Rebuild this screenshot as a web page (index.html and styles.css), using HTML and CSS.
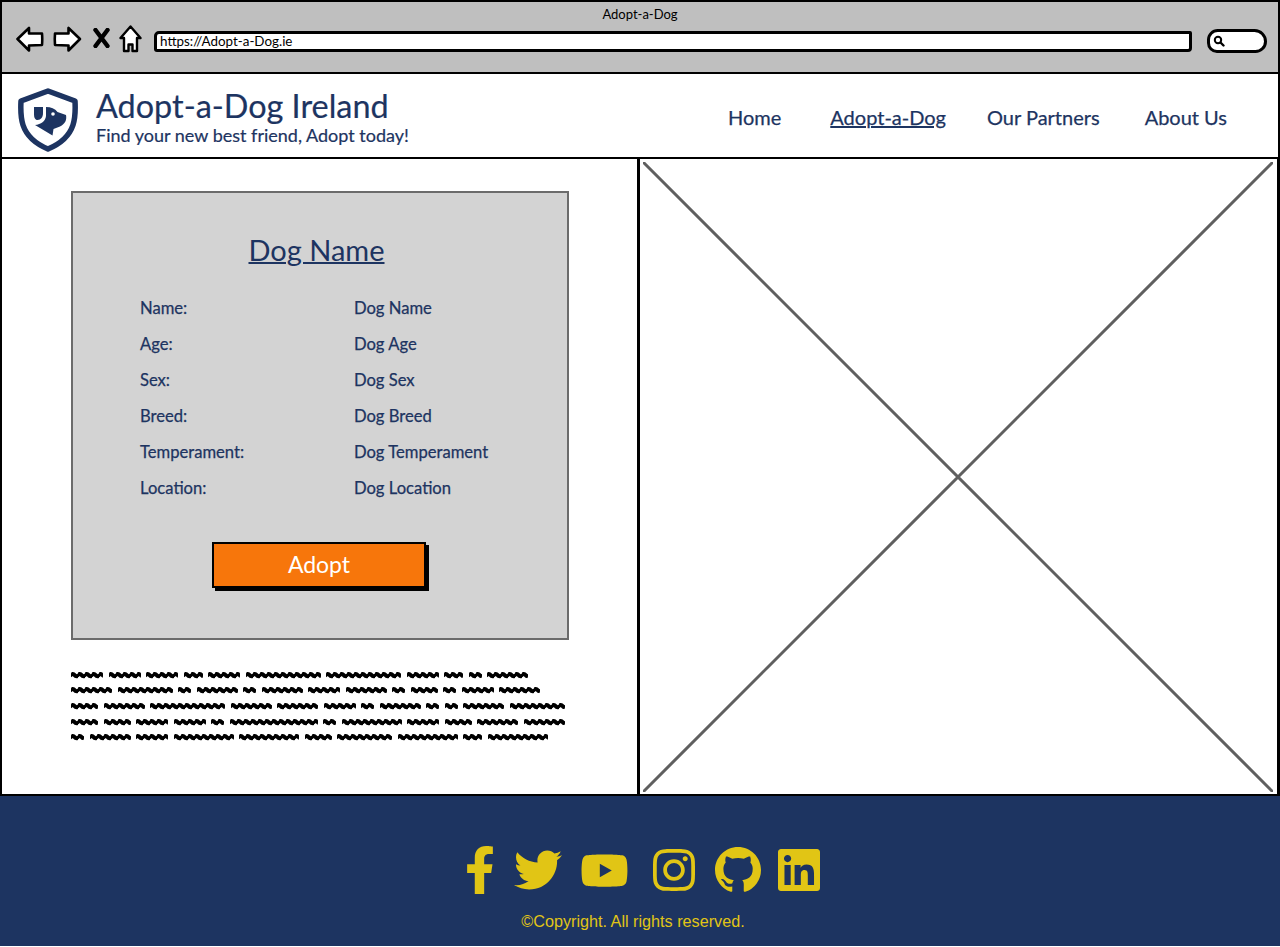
FILE: index.html
```html
<!DOCTYPE html>
<html lang="en">
<head>
    <meta charset="UTF-8">
    <meta name="viewport" content="width=device-width, initial-scale=1.0">
    <title>Adopt-a-Dog</title>
    <link rel="stylesheet" href="styles.css">
</head>
<body>
    <div class="page">
        <!-- Browser toolbar -->
        <div class="toolbar">
            <div class="toolbar-title">Adopt-a-Dog</div>
            <div class="toolbar-row">
                <div class="toolbar-icons">
                    <svg class="tool-icon" width="28" height="26" viewBox="0 0 28 26"><path d="M1.5 13 L13 2 V7.5 H26 Q26.5 13 26 19 L13 19.5 V24.5 Z" fill="#fff" stroke="#000" stroke-width="2.6" stroke-linejoin="round"/></svg>
                    <svg class="tool-icon" width="29" height="26" viewBox="0 0 29 26"><path d="M27 13 L15.5 2 V7.5 H2 Q1.5 13 2 19 L15.5 19.5 V24.5 Z" fill="#fff" stroke="#000" stroke-width="2.6" stroke-linejoin="round"/></svg>
                    <svg class="tool-icon tool-stop" width="17" height="20" viewBox="0 0 17 20"><path d="M2.5 2 L14.5 18 M14.5 2 L2.5 18" fill="none" stroke="#000" stroke-width="4.4" stroke-linecap="round"/></svg>
                    <svg class="tool-icon" width="23" height="28" viewBox="0 0 23 28"><path d="M11.5 1.5 L21.5 13 H18 V26 H13.5 V19.5 H9.5 V26 H5 V13 H1.5 Z" fill="#fff" stroke="#000" stroke-width="2.4" stroke-linejoin="round"/></svg>
                </div>
                <div class="address-bar">https://Adopt-a-Dog.ie</div>
                <div class="search-box">
                    <svg width="12" height="12" viewBox="0 0 12 12"><circle cx="5" cy="5" r="3.2" fill="none" stroke="#000" stroke-width="2"/><path d="M7.5 7.5 L10.5 10.5" stroke="#000" stroke-width="2.4" stroke-linecap="round"/></svg>
                </div>
            </div>
        </div>

        <!-- Site header -->
        <header class="site-header">
            <div class="brand">
                <svg class="logo" width="60" height="64" viewBox="0 0 60 64">
                    <path d="M30 3 L57 13 C57.5 22 57.5 29 55 37 C51 49 42 56 30 61 C18 56 9 49 5 37 C2.5 29 2.5 22 3 13 Z" fill="#fff" stroke="#1d3461" stroke-width="5.5" stroke-linejoin="round"/>
                    <path d="M16 19 H25 V25 C25 29 23 32 19.5 32 C17 32 16 29.5 16 26 Z" fill="#1d3461"/>
                    <path d="M28 19 C33 19 37 20.5 39.5 24 L48 27 C49 32 47 36 42 38.5 L35.5 41 L34.5 47.5 L17 37 C23 36.5 27.5 33 28 28 Z" fill="#1d3461"/>
                    <circle cx="35" cy="26" r="1.8" fill="#fff"/>
                </svg>
                <div class="brand-text">
                    <h1 class="brand-title">Adopt-a-Dog Ireland</h1>
                    <p class="brand-tagline">Find your new best friend, Adopt today!</p>
                </div>
            </div>
            <nav class="main-nav">
                <a href="#">Home</a>
                <a href="#" class="active">Adopt-a-Dog</a>
                <a href="#">Our Partners</a>
                <a href="#">About Us</a>
            </nav>
        </header>

        <main class="content">
            <section class="panel-left">
                <div class="dog-card">
                    <h2 class="dog-title">Dog Name</h2>
                    <div class="dog-details">
                        <span>Name:</span><span>Dog Name</span>
                        <span>Age:</span><span>Dog Age</span>
                        <span>Sex:</span><span>Dog Sex</span>
                        <span>Breed:</span><span>Dog Breed</span>
                        <span>Temperament:</span><span>Dog Temperament</span>
                        <span>Location:</span><span>Dog Location</span>
                    </div>
                    <button type="button" class="adopt-btn">Adopt</button>
                </div>
                <!-- Placeholder copy, drawn as squiggles -->
                <div class="squiggles" aria-hidden="true">
                    <div class="sq-line"><i class="w5"></i><i class="w5"></i><i class="w5"></i><i class="w3"></i><i class="w5"></i><i class="w11"></i><i class="w11"></i><i class="w5"></i><i class="w3"></i><i class="w2"></i><i class="w6"></i></div>
                    <div class="sq-line"><i class="w6"></i><i class="w8"></i><i class="w2"></i><i class="w6"></i><i class="w2"></i><i class="w6"></i><i class="w5"></i><i class="w6"></i><i class="w2"></i><i class="w4"></i><i class="w2"></i><i class="w5"></i><i class="w6"></i></div>
                    <div class="sq-line"><i class="w4"></i><i class="w6"></i><i class="w11"></i><i class="w6"></i><i class="w6"></i><i class="w5"></i><i class="w2"></i><i class="w6"></i><i class="w2"></i><i class="w2"></i><i class="w6"></i><i class="w8"></i></div>
                    <div class="sq-line"><i class="w4"></i><i class="w4"></i><i class="w5"></i><i class="w5"></i><i class="w2"></i><i class="w12"></i><i class="w2"></i><i class="w9"></i><i class="w5"></i><i class="w4"></i><i class="w6"></i><i class="w6"></i></div>
                    <div class="sq-line"><i class="w2"></i><i class="w6"></i><i class="w5"></i><i class="w9"></i><i class="w9"></i><i class="w4"></i><i class="w8"></i><i class="w9"></i><i class="w3"></i><i class="w9"></i></div>
                </div>
            </section>
            <section class="panel-right">
                <svg class="image-cross" viewBox="0 0 100 100" preserveAspectRatio="none">
                    <path d="M0 0 L100 100 M100 0 L0 100" stroke="#5f5f5f" stroke-width="3" fill="none" vector-effect="non-scaling-stroke"/>
                </svg>
            </section>
        </main>

        <footer class="site-footer">
            <div class="social">
                <svg class="soc-f" viewBox="0 0 320 512"><path d="M279.14 288l14.22-92.66h-88.91v-60.13c0-25.35 12.42-50.06 52.24-50.06h40.42V6.26S260.43 0 225.36 0c-73.22 0-121.08 44.38-121.08 124.72v70.62H22.89V288h81.39v224h100.17V288z"/></svg>
                <svg class="soc-tw" viewBox="0 0 512 512"><path d="M459.37 151.716c.325 4.548.325 9.097.325 13.645 0 138.72-105.583 298.558-298.558 298.558-59.452 0-114.68-17.219-161.137-47.106 8.447.974 16.568 1.299 25.34 1.299 49.055 0 94.213-16.568 130.274-44.832-46.132-.975-84.792-31.188-98.112-72.772 6.498.974 12.995 1.624 19.818 1.624 9.421 0 18.843-1.3 27.614-3.573-48.081-9.747-84.143-51.98-84.143-102.985v-1.299c13.969 7.797 30.214 12.67 47.431 13.319-28.264-18.843-46.781-51.005-46.781-87.391 0-19.492 5.197-37.36 14.294-52.954 51.655 63.675 129.3 105.258 216.365 109.807-1.624-7.797-2.599-15.918-2.599-24.04 0-57.828 46.782-104.934 104.934-104.934 30.213 0 57.502 12.67 76.67 33.137 23.715-4.548 46.456-13.32 66.599-25.34-7.798 24.366-24.366 44.833-46.132 57.827 21.117-2.273 41.584-8.122 60.426-16.243-14.292 20.791-32.161 39.308-52.628 54.253z"/></svg>
                <svg class="soc-yt" viewBox="0 0 576 512"><path d="M549.655 124.083c-6.281-23.65-24.787-42.276-48.284-48.597C458.781 64 288 64 288 64S117.22 64 74.629 75.486c-23.497 6.322-42.003 24.947-48.284 48.597-11.412 42.867-11.412 132.305-11.412 132.305s0 89.438 11.412 132.305c6.281 23.65 24.787 41.5 48.284 47.821C117.22 448 288 448 288 448s170.78 0 213.371-11.486c23.497-6.321 42.003-24.171 48.284-47.821 11.412-42.867 11.412-132.305 11.412-132.305s0-89.438-11.412-132.305zm-317.51 213.508V175.185l142.739 81.205-142.739 81.201z"/></svg>
                <svg class="soc-ig" viewBox="0 0 448 512"><path d="M224.1 141c-63.6 0-114.9 51.3-114.9 114.9s51.3 114.9 114.9 114.9S339 319.5 339 255.9 287.7 141 224.1 141zm0 189.6c-41.1 0-74.7-33.5-74.7-74.7s33.5-74.7 74.7-74.7 74.7 33.5 74.7 74.7-33.6 74.7-74.7 74.7zm146.4-194.3c0 14.9-12 26.8-26.8 26.8-14.9 0-26.8-12-26.8-26.8s12-26.8 26.8-26.8 26.8 12 26.8 26.8zm76.1 27.2c-1.7-35.9-9.9-67.7-36.2-93.9-26.2-26.2-58-34.4-93.9-36.2-37-2.1-147.9-2.1-184.9 0-35.8 1.7-67.6 9.9-93.9 36.1s-34.4 58-36.2 93.9c-2.1 37-2.1 147.9 0 184.9 1.7 35.9 9.9 67.7 36.2 93.9s58 34.4 93.9 36.2c37 2.1 147.9 2.1 184.9 0 35.9-1.7 67.7-9.9 93.9-36.2 26.2-26.2 34.4-58 36.2-93.9 2.1-37 2.1-147.8 0-184.8zM398.8 388c-7.8 19.6-22.9 34.7-42.6 42.6-29.5 11.7-99.5 9-132.1 9s-102.7 2.6-132.1-9c-19.6-7.8-34.7-22.9-42.6-42.6-11.7-29.5-9-99.5-9-132.1s-2.6-102.7 9-132.1c7.8-19.6 22.9-34.7 42.6-42.6 29.5-11.7 99.5-9 132.1-9s102.7-2.6 132.1 9c19.6 7.8 34.7 22.9 42.6 42.6 11.7 29.5 9 99.5 9 132.1s2.7 102.7-9 132.1z"/></svg>
                <svg class="soc-gh" viewBox="0 0 16 16"><path d="M8 0C3.58 0 0 3.58 0 8c0 3.54 2.29 6.53 5.47 7.59.4.07.55-.17.55-.38 0-.19-.01-.82-.01-1.49-2.01.37-2.53-.49-2.69-.94-.09-.23-.48-.94-.82-1.13-.28-.15-.68-.52-.01-.53.63-.01 1.08.58 1.23.82.72 1.21 1.87.87 2.33.66.07-.52.28-.87.51-1.07-1.78-.2-3.64-.89-3.64-3.95 0-.87.31-1.59.82-2.15-.08-.2-.36-1.02.08-2.12 0 0 .67-.21 2.2.82.64-.18 1.32-.27 2-.27.68 0 1.36.09 2 .27 1.53-1.04 2.2-.82 2.2-.82.44 1.1.16 1.92.08 2.12.51.56.82 1.27.82 2.15 0 3.07-1.87 3.75-3.65 3.95.29.25.54.73.54 1.48 0 1.07-.01 1.93-.01 2.2 0 .21.15.46.55.38A8.013 8.013 0 0016 8c0-4.42-3.58-8-8-8z"/></svg>
                <svg class="soc-in" viewBox="0 0 448 512"><path d="M416 32H31.9C14.3 32 0 46.5 0 64.3v383.4C0 465.5 14.3 480 31.9 480H416c17.6 0 32-14.5 32-32.3V64.3c0-17.8-14.4-32.3-32-32.3zM135.4 416H69V202.2h66.5V416zm-33.2-243c-21.3 0-38.5-17.3-38.5-38.5S80.9 96 102.2 96c21.2 0 38.5 17.3 38.5 38.5 0 21.3-17.2 38.5-38.5 38.5zm282.1 243h-66.4V312c0-24.8-.5-56.7-34.5-56.7-34.6 0-39.9 27-39.9 54.9V416h-66.4V202.2h63.7v29.2h.9c8.9-16.8 30.6-34.5 62.9-34.5 67.2 0 79.7 44.3 79.7 101.9V416z"/></svg>
            </div>
            <p class="copyright">©Copyright. All rights reserved.</p>
        </footer>
    </div>
</body>
</html>
```

FILE: styles.css
```css
* {
    box-sizing: border-box;
}

body {
    margin: 0;
    background-color: #ffffff;
    color: #1d3461;
    font-family: Lato, "Open Sans", sans-serif;
}

.page {
    display: flex;
    flex-direction: column;
    height: 946px;
    overflow: hidden;
}

/* Browser toolbar */
.toolbar {
    height: 74px;
    padding: 5px 11px 0 16px;
    background-color: #bfbfbf;
    border: 2px solid #000000;
    color: #000000;
}

.toolbar-title {
    margin-right: 5px;
    font-size: 13px;
    line-height: 14px;
    text-align: center;
}

.toolbar-row {
    display: flex;
    align-items: center;
    margin-top: 3px;
    height: 30px;
}

.toolbar-icons {
    display: flex;
    align-items: center;
    margin-left: -2px;
    gap: 9px;
}

.tool-stop {
    margin: 0 0 2px 2px;
}

.address-bar {
    flex: 1;
    height: 21px;
    margin: 5px 15px 0 12px;
    padding-left: 3px;
    background-color: #ffffff;
    border: 3px solid #000000;
    border-radius: 5px 2px 4px 3px;
    font-size: 13.4px;
    line-height: 14px;
}

.search-box {
    display: flex;
    align-items: center;
    width: 60px;
    height: 24px;
    margin-top: 3px;
    padding-left: 3px;
    background-color: #ffffff;
    border: 3px solid #000000;
    border-radius: 13px 15px 14px 12px;
}

/* Header */
.site-header {
    display: flex;
    justify-content: space-between;
    align-items: center;
    height: 85px;
    padding: 0 51px 1px 16px;
    border: 2px solid #000000;
    border-width: 0 2px 2px;
}

.brand {
    display: flex;
    align-items: center;
    gap: 18px;
}

.logo {
    margin-top: 10px;
}

.brand-text {
    padding-top: 3px;
}

.brand-title {
    margin: 0;
    font-size: 32.4px;
    font-weight: 400;
    line-height: 36px;
    -webkit-text-stroke: 0.2px #1d3461;
}

.brand-tagline {
    margin: 0;
    font-size: 18px;
    line-height: 22px;
    -webkit-text-stroke: 0.2px #1d3461;
}

.main-nav {
    display: flex;
    gap: 45px;
    margin-top: 4px;
}

.main-nav a {
    color: #1d3461;
    font-size: 20px;
    text-decoration: none;
    -webkit-text-stroke: 0.25px #1d3461;
}

.main-nav a.active {
    margin: 0 -4px 0 4px;
    text-decoration: underline;
}

/* Main area */
.content {
    display: grid;
    grid-template-columns: 1fr 1fr;
    height: 637px;
    border-bottom: 2px solid #000000;
}

.panel-left {
    padding: 32px 68px 0 71px;
    border-left: 2px solid #000000;
    border-right: 3px solid #000000;
}

.panel-right {
    padding: 3px 4px 2px 3px;
    border-right: 3px solid #000000;
}

.image-cross {
    display: block;
    width: 100%;
    height: 100%;
}

.dog-card {
    display: flex;
    flex-direction: column;
    height: 449px;
    margin-left: -2px;
    padding: 39px 0 0 67px;
    background-color: #d3d3d3;
    border: 2px solid #6b6b6b;
}

.dog-title {
    margin: 0 0 22px -7px;
    padding-right: 67px;
    font-size: 29px;
    font-weight: 400;
    line-height: 36px;
    text-align: center;
    text-decoration: underline;
    text-decoration-thickness: 2px;
}

.dog-details {
    display: grid;
    grid-template-columns: 214px 1fr;
    grid-auto-rows: 36px;
    align-items: center;
    font-size: 16.6px;
    -webkit-text-stroke: 0.25px #1d3461;
}

.adopt-btn {
    width: 214px;
    height: 46px;
    margin: 36px 0 0 72px;
    padding-bottom: 4px;
    background-color: #f7760b;
    border: 2px solid #000000;
    box-shadow: 3px 3px 0 #000000;
    color: #ffffff;
    font-family: inherit;
    font-size: 23px;
}

/* Squiggle copy */
.squiggles {
    margin-top: 27px;
    margin-left: -2px;
}

.sq-line {
    display: flex;
    gap: 5.5px;
    height: 15.6px;
    align-items: center;
}

.sq-line i {
    display: block;
    height: 8px;
    border-radius: 3px;
    background-image: url("data:image/svg+xml,%3Csvg xmlns='http://www.w3.org/2000/svg' width='7' height='8'%3E%3Cpath d='M-1 5 Q1.7 1.5 3.5 4 T8 4' fill='none' stroke='%23000' stroke-width='4'/%3E%3C/svg%3E");
    background-repeat: repeat-x;
    filter: blur(0.35px);
}

.w2 { width: 13px; }
.w3 { width: 19px; }
.w4 { width: 27px; }
.w5 { width: 32px; }
.w6 { width: 41px; }
.w8 { width: 55px; }
.w9 { width: 60px; }
.w11 { width: 75px; }
.w12 { width: 88px; }

/* Footer */
.site-footer {
    flex: 1;
    padding-top: 50px;
    background-color: #1d3461;
    color: #e1c515;
    text-align: center;
}

.social {
    display: flex;
    justify-content: center;
    align-items: center;
    height: 48px;
    padding-left: 5px;
    gap: 19px;
}

.social svg {
    height: 48px;
    fill: #e1c515;
}

.soc-f { width: 30px; }
.soc-tw { width: 48px; }
.soc-yt { width: 49px; height: 43px !important; margin-left: -1px; }
.soc-ig { width: 42px; margin-left: 5px; }
.soc-gh { width: 46px; height: 46px !important; margin-left: 1px; }
.soc-in { width: 42px; margin-left: -2px; }

.copyright {
    margin: 17px 14px 0 0;
    font-family: "Liberation Sans", Arial, sans-serif;
    font-size: 16.2px;
    line-height: 20px;
}
```
